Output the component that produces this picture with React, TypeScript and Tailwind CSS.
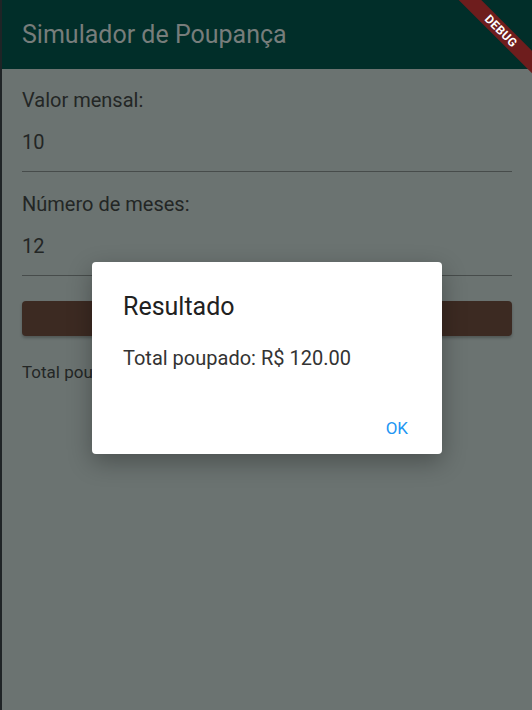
import React from 'react';

const font = { fontFamily: 'Roboto, "Noto Sans", sans-serif' };

function DebugBanner() {
  return (
    <div className="pointer-events-none absolute top-0 right-0 h-[80px] w-[80px] overflow-hidden">
      <div className="absolute left-[-11px] top-[23px] flex h-[16px] w-[120px] rotate-45 items-center justify-center bg-[#6e1d1d] text-[12px] font-bold tracking-wide text-white">
        DEBUG
      </div>
    </div>
  );
}

function Field({ label, value, first }: { label: string; value: string; first?: boolean }) {
  return (
    <div className={`border-b border-[#474c4b] pb-[17px] ${first ? 'pt-[19px]' : 'pt-[20px]'}`}>
      <div className="text-[20px] leading-[24px] text-[#232625]">{label}</div>
      <div className="mt-[18px] text-[20px] leading-[24px] text-[#232625]">{value}</div>
    </div>
  );
}

export default function App() {
  return (
    <div className="relative flex h-[710px] w-[532px] overflow-hidden bg-[#6b7371]" style={font}>
      <div className="w-[2px] shrink-0 bg-[#1f2426]" />
      <div className="flex flex-1 flex-col">
        <header className="relative flex h-[69px] shrink-0 items-center bg-[#012e29] px-[20px]">
          <h1 className="text-[25px] text-[#777d7b]">Simulador de Poupança</h1>
          <DebugBanner />
        </header>
        <main className="flex flex-col px-[20px]">
          <Field first label="Valor mensal:" value="10" />
          <Field label="Número de meses:" value="12" />
          <div className="mt-[25px] h-[35px] rounded-[4px] bg-[#3c2a22] shadow-[0_2px_3px_rgba(0,0,0,0.25)]" />
          <p className="mt-[25px] text-[17px] leading-[22px] text-[#232625]">Total poupado: R$ 120.00</p>
        </main>
      </div>

      <div className="absolute left-[92px] top-[262px] flex h-[192px] w-[350px] flex-col rounded-[4px] bg-white px-[31px] shadow-[0_8px_24px_rgba(0,0,0,0.3)]">
        <h2 className="mt-[29px] text-[25px] leading-[32px] text-[#212121]">Resultado</h2>
        <p className="mt-[23px] text-[20px] leading-[24px] text-[#333333]">Total poupado: R$ 120.00</p>
        <div className="mt-auto mb-[13px] flex justify-end">
          <button className="mr-[3px] text-[17px] text-[#2196f3]">OK</button>
        </div>
      </div>
    </div>
  );
}
